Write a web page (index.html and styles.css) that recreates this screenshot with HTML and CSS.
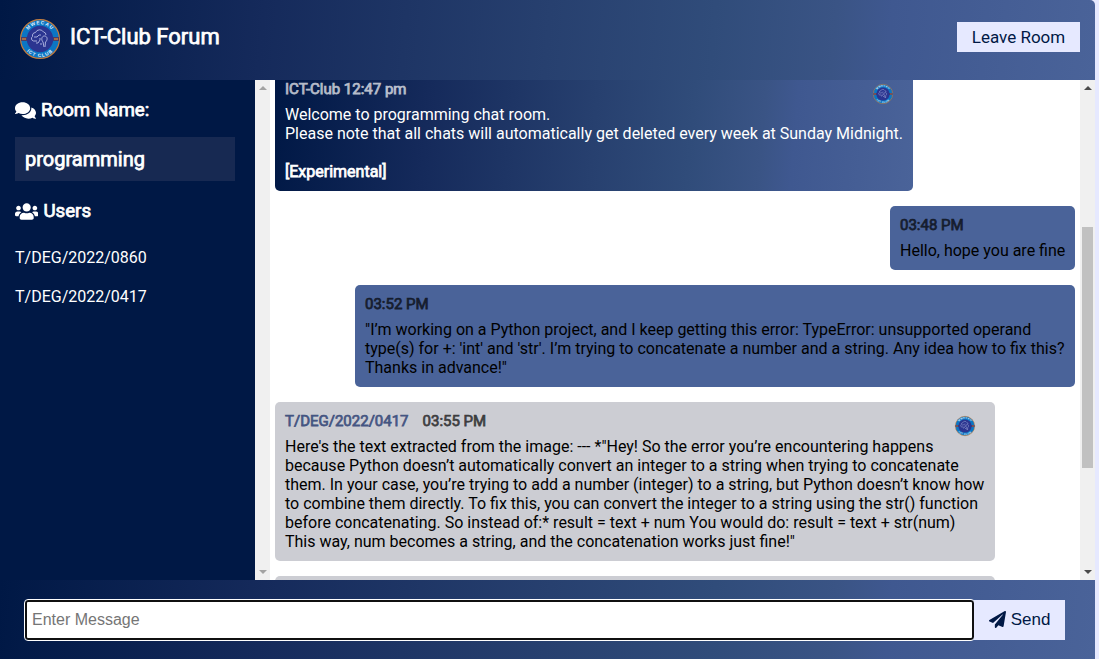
FILE: index.html
```html
<!DOCTYPE html>
<html lang="en">
<head>
<meta charset="utf-8">
<title>ICT-Club Forum</title>
<link rel="stylesheet" href="styles.css">
</head>
<body>
<svg width="0" height="0" class="defs" aria-hidden="true">
  <symbol id="logo" viewBox="0 0 40 40" overflow="visible">
    <circle cx="20" cy="20" r="19.4" fill="#0b76c4" stroke="#c47c3d" stroke-width="1.2"/>
    <path d="M1 18h38v4H1z" fill="#4a3d68"/>
    <path d="M2 20h4M34 20h4" stroke="#c47c3d" stroke-width="1.4"/>
    <circle cx="20" cy="20" r="13.2" fill="#2b3590"/>
    <path d="M17 22h-3.500a2.500 2.500 0 0 1-1-4.500 3.500 3.500 0 0 1 3-4 4.500 4.500 0 0 1 8-.5 3 3 0 0 1 2.500 3M14 18h3l2-2h2M16 24h2l2-3v-2M21 24v2M24 28l-1-5c-2-2-1.500-6 1.500-6s3.500 4 1 6l-.5 5" fill="none" stroke="#b4bae4" stroke-width=".9"/>
    <path id="arc-top" d="M5.200 20a14.800 14.800 0 0 1 29.600 0" fill="none"/>
    <path id="arc-bottom" d="M2 20a18 18 0 0 0 36 0" fill="none"/>
    <text class="logo-text"><textPath href="#arc-top" startOffset="50%" text-anchor="middle">MWECAU</textPath></text>
    <text class="logo-text"><textPath href="#arc-bottom" startOffset="50%" text-anchor="middle">ICT CLUB</textPath></text>
  </symbol>
</svg>
<div class="chat">
  <header class="chat-header">
    <div class="brand">
      <svg class="brand-logo"><use href="#logo"/></svg>
      <h1 class="faux">ICT-Club Forum</h1>
    </div>
    <a class="btn leave">Leave Room</a>
  </header>
  <main class="chat-main">
    <aside class="sidebar">
      <div class="side-content">
        <h3 class="faux"><svg class="ic-comments" viewBox="0 0 576 512"><path d="M416 192c0-88.4-93.1-160-208-160S0 103.6 0 192c0 34.3 14.1 65.9 38 92-13.4 30.2-35.5 54.2-35.8 54.5-2.2 2.3-2.8 5.7-1.5 8.700S4.800 352 8 352c36.600 0 66.900-12.300 88.700-25 32.200 15.700 70.300 25 111.300 25 114.900 0 208-71.600 208-160zm122 220c23.900-26 38-57.700 38-92 0-66.900-53.500-124.200-129.300-148.100.9 6.600 1.300 13.300 1.300 20.100 0 105.900-107.700 192-240 192-10.800 0-21.300-.8-31.700-1.900C207.800 439.600 281.800 480 368 480c41 0 79.100-9.200 111.300-25 21.800 12.700 52.100 25 88.700 25 3.200 0 6.100-1.900 7.300-4.800 1.300-2.900.7-6.300-1.500-8.700-.3-.3-22.400-24.200-35.800-54.500z"/></svg>Room Name:</h3>
        <h2 class="room faux">programming</h2>
        <h3 class="faux"><svg class="ic-users" viewBox="0 0 640 512"><path d="M96 224c35.300 0 64-28.700 64-64s-28.700-64-64-64-64 28.700-64 64 28.700 64 64 64zm448 0c35.300 0 64-28.700 64-64s-28.700-64-64-64-64 28.700-64 64 28.700 64 64 64zm32 32h-64c-17.600 0-33.500 7.100-45.100 18.600 40.300 22.100 68.900 62 75.100 109.400h66c17.700 0 32-14.300 32-32v-32c0-35.300-28.700-64-64-64zm-256 0c61.900 0 112-50.100 112-112S381.900 32 320 32 208 82.100 208 144s50.100 112 112 112zm76.800 32h-8.300c-20.800 10-43.900 16-68.500 16s-47.600-6-68.500-16h-8.300C179.600 288 128 339.600 128 403.200V432c0 26.500 21.500 48 48 48h288c26.500 0 48-21.500 48-48v-28.800c0-63.600-51.600-115.200-115.200-115.200zm-223.700-13.400C161.500 263.100 145.600 256 128 256H64c-35.300 0-64 28.700-64 64v32c0 17.700 14.300 32 32 32h65.900c6.300-47.400 34.900-87.300 75.200-109.400z"/></svg>Users</h3>
        <ul class="users"><li>T/DEG/2022/0860</li><li>T/DEG/2022/0417</li></ul>
      </div>
      <div class="scrollbar idle"><i class="up"></i><i class="down"></i></div>
    </aside>
    <section class="messages">
      <div class="message bot">
        <div class="meta"><span class="faux">ICT-Club 12:47 pm</span><svg class="avatar"><use href="#logo"/></svg></div>
        <p>Welcome to programming chat room.<br>Please note that all chats will automatically get deleted every week at Sunday Midnight.<br><br><span class="faux">[Experimental]</span></p>
      </div>
      <div class="message mine">
        <div class="meta"><span class="faux">03:48 PM</span></div>
        <p>Hello, hope you are fine</p>
      </div>
      <div class="message mine">
        <div class="meta"><span class="faux">03:52 PM</span></div>
        <p>"I’m working on a Python project, and I keep getting this error: TypeError: unsupported operand<br>type(s) for +: 'int' and 'str'. I’m trying to concatenate a number and a string. Any idea how to fix this?<br>Thanks in advance!"</p>
      </div>
      <div class="message other">
        <div class="meta"><span class="author faux">T/DEG/2022/0417</span><span class="faux">03:55 PM</span><svg class="avatar"><use href="#logo"/></svg></div>
        <p>Here's the text extracted from the image: --- *"Hey! So the error you’re encountering happens<br>because Python doesn’t automatically convert an integer to a string when trying to concatenate<br>them. In your case, you’re trying to add a number (integer) to a string, but Python doesn’t know how<br>to combine them directly. To fix this, you can convert the integer to a string using the str() function<br>before concatenating. So instead of:* result = text + num You would do: result = text + str(num)<br>This way, num becomes a string, and the concatenation works just fine!"</p>
      </div>
      <div class="message other"></div>
    </section>
    <div class="scrollbar"><i class="up"></i><b class="thumb"></b><i class="down"></i></div>
  </main>
  <form class="composer">
    <input class="field" type="text" placeholder="Enter Message">
    <button class="btn send" type="button"><svg class="ic-plane" viewBox="0 0 512 512"><path d="M476 3.200L12.500 270.600c-18.100 10.400-15.800 35.600 2.200 43.200L121 358.400l287.300-253.200c5.500-4.900 13.300 2.600 8.600 8.300L176 407v80.500c0 23.600 28.500 32.900 42.500 15.800L282 426l124.600 52.200c14.200 6 30.400-2.900 33-18.200l72-432C515 7.800 493.300-6.800 476 3.200z"/></svg>Send</button>
  </form>
</div>
</body>
</html>
```
FILE: styles.css
```css
* { box-sizing: border-box; margin: 0; padding: 0; }
:root { --fade: linear-gradient(95deg, #001845 0%, #152a5b 24%, #27406f 50%, #304c7a 65%, #3a5485 76%, #3f5890 81%, #4a6399 100%); }
body { width: 1099px; height: 659px; overflow: hidden; background: #e6e9ff; font: 16px/19px Roboto, sans-serif; }
.defs { position: absolute; overflow: visible; }
.logo-text { font: bold 4.800px "Liberation Sans", sans-serif; fill: #e4f2ff; letter-spacing: .9px; }
.brand-logo, .avatar { overflow: visible; }
.faux { font-weight: 400; -webkit-text-stroke: .75px currentColor; }
.chat { width: 1095px; height: 659px; display: flex; flex-direction: column; }
.chat-header { height: 80px; display: flex; align-items: center; justify-content: space-between; padding: 0 15px 0 20px; background: var(--fade); border-top-right-radius: 5px; color: #fff; }
.brand { display: flex; align-items: center; gap: 10px; padding-bottom: 2px; }
.brand-logo { width: 40px; height: 40px; }
h1 { font-size: 22px; line-height: 26px; padding-bottom: 4px; }
.btn { background: #e6e9ff; color: #001845; border: 0; display: flex; align-items: center; justify-content: center; }
.leave { width: 123px; height: 30px; font-size: 17px; margin-top: -6px; }
.chat-main { height: 500px; display: flex; background: #fff; }
.sidebar { width: 270px; background: #001845; color: #fff; display: flex; }
.side-content { width: 255px; padding: 19px 20px 0 15px; }
h3 { font-size: 18.720px; line-height: 22px; display: flex; align-items: center; gap: 5px; }
h3 svg { fill: #fff; height: 19px; flex: none; stroke: none; }
.ic-comments { width: 21px; }
.ic-users { width: 23.400px; }
.room { font-size: 20px; line-height: 24px; padding: 10px; margin: 16px 0 19px; background: #172952; }
.users { list-style: none; padding-top: 16px; }
.users li { height: 39px; line-height: 39px; }
.scrollbar { width: 15px; height: 500px; background: #f0f0f0; display: flex; flex-direction: column; justify-content: space-between; align-items: center; padding: 6px 0; color: #4a4a4a; flex: none; }
.idle { color: #a3a3a3; }
.up, .down { border: 4px solid transparent; width: 0; height: 0; }
.up { border-top: 0; border-bottom-color: currentColor; }
.down { border-bottom: 0; border-top-color: currentColor; }
.thumb { width: 11px; height: 241px; margin-top: 35px; background: #c1c1c1; }
.messages { width: 810px; height: 500px; overflow: hidden; padding: 0 5px; display: flex; flex-direction: column; align-items: flex-start; gap: 15px; }
.message { padding: 10px; border-radius: 5px; flex: none; white-space: nowrap; }
.meta { height: 17px; font-size: 15px; line-height: 18px; margin-bottom: 8px; display: flex; }
.meta .faux { opacity: .7; line-height: 19px; }
.avatar { width: 20px; height: 20px; margin: 4px 10px 0 auto; flex: none; }
.bot { width: 638px; height: 121px; margin-top: -10px; background: var(--fade); color: #fff; }
.mine { align-self: flex-end; background: #4a6399; color: #000; }
.mine:nth-child(2) { width: 185px; height: 64px; }
.mine:nth-child(3) { width: 720px; height: 102px; }
.other { width: 720px; height: 159px; background: #cccdd3; color: #000; }
.author { color: #0a2360; margin-right: 14px; }
.composer { height: 79px; padding: 20px 30px 19px 25px; background: var(--fade); display: flex; }
.field { width: 949px; height: 40px; flex: none; border: 2px solid #101010; border-radius: 3px; outline: 1px solid #fff; padding: 0 5px; font: 16px "Liberation Sans", sans-serif; background: #fff; }
.field::placeholder { color: #757575; }
.send { width: 91px; height: 40px; padding-bottom: 1px; font: 17px "Liberation Sans", sans-serif; gap: 5px; }
.ic-plane { width: 17px; height: 17px; fill: #001845; }
```
